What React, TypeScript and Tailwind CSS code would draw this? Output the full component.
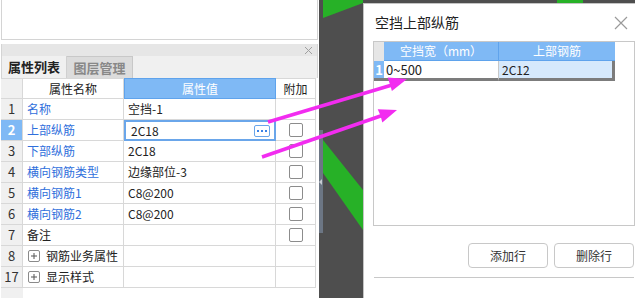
import React from "react";

const FONT = { fontFamily: '"Noto Sans CJK SC", "Noto Sans", sans-serif' };

type Row = { n: string; name: string; value: string; blue?: boolean; check?: boolean; group?: boolean; sel?: boolean };

const rows: Row[] = [
  { n: "1", name: "名称", value: "空挡-1", blue: true },
  { n: "2", name: "上部纵筋", value: "2C18", blue: true, check: true, sel: true },
  { n: "3", name: "下部纵筋", value: "2C18", blue: true, check: true },
  { n: "4", name: "横向钢筋类型", value: "边缘部位-3", blue: true, check: true },
  { n: "5", name: "横向钢筋1", value: "C8@200", blue: true, check: true },
  { n: "6", name: "横向钢筋2", value: "C8@200", blue: true, check: true },
  { n: "7", name: "备注", value: "", check: true },
  { n: "8", name: "钢筋业务属性", value: "", group: true },
  { n: "17", name: "显示样式", value: "", group: true },
];

function PlusBox() {
  return (
    <span className="inline-flex items-center justify-center w-[12px] h-[12px] border border-[#8a8a8a] rounded-[2px] mr-[6px] ml-[1px]">
      <svg width="8" height="8" viewBox="0 0 8 8">
        <path d="M1 4h6M4 1v6" stroke="#555" strokeWidth="1" />
      </svg>
    </span>
  );
}

function LeftPanel() {
  return (
    <div className="w-[319px] h-[298px] bg-white flex flex-col shrink-0">
      <div className="h-[40px] ml-[1px] mr-[1px] border-x border-b border-[#d4d4d4] bg-white" />
      <div className="h-[4px]" />
      <div className="h-[12px] ml-[1px] mr-[1px] bg-[#e6e6e6] border-x border-[#d4d4d4] flex items-center justify-end pr-[4px]">
        <svg width="9" height="9" viewBox="0 0 9 9">
          <path d="M1 1l7 7M8 1l-7 7" stroke="#a0a0a0" strokeWidth="1" />
        </svg>
      </div>
      <div className="h-[22px] ml-[1px] mr-[1px] bg-[#f0f0f0] border-x border-[#d4d4d4] flex items-stretch text-[13px]">
        <div className="w-[65px] flex items-center justify-center font-bold text-[#222] bg-[#f0f0f0] border-r border-[#d0d0d0]">属性列表</div>
        <div className="w-[66px] flex items-center justify-center font-bold text-[#888] bg-[#dcdcdc] border-r border-[#c8c8c8] border-t">图层管理</div>
      </div>
      <div className="ml-[1px] grid grid-cols-[22px_101px_152px_40px] text-[12px] w-[316px]">
        <div className="h-[21px] bg-[#f0f0f0] border-r border-b border-t border-[#d8d8d8]" />
        <div className="h-[21px] flex items-center justify-center border-r border-b border-t border-[#d8d8d8] text-[#222]">属性名称</div>
        <div className="h-[21px] flex items-center justify-center bg-[#7fb9f5] border border-[#5fa3ec] text-white">属性值</div>
        <div className="h-[21px] flex items-center justify-center border-r border-b border-t border-[#d8d8d8] text-[#222]">附加</div>
        {rows.map((r) => (
          <React.Fragment key={r.n}>
            <div
              className={
                "h-[21px] flex items-center justify-center border-r border-b border-[#d8d8d8] text-[13px] " +
                (r.sel ? "bg-[#7fb9f5] text-white font-bold" : "bg-[#f0f0f0] text-[#333]")
              }
            >
              {r.n}
            </div>
            <div
              className={
                "h-[21px] flex items-center pl-[4px] border-r border-b border-[#d8d8d8] whitespace-nowrap " +
                (r.blue ? "text-[#2f6fdc]" : "text-[#222]")
              }
            >
              {r.group && <PlusBox />}
              {r.name}
            </div>
            {r.sel ? (
              <div className="h-[21px] flex items-center justify-between pl-[5px] pr-[4px] border-2 border-[#6aa6ea] bg-white text-[#222]">
                <span>{r.value}</span>
                <span className="w-[16px] h-[12px] border border-[#6aa6ea] rounded-[2px] flex items-center justify-center gap-[2px]">
                  <span className="w-[2px] h-[2px] bg-[#3b82e6]" />
                  <span className="w-[2px] h-[2px] bg-[#3b82e6]" />
                  <span className="w-[2px] h-[2px] bg-[#3b82e6]" />
                </span>
              </div>
            ) : (
              <div className="h-[21px] flex items-center pl-[4px] border-r border-b border-[#d8d8d8] text-[#222] whitespace-nowrap">
                {r.value}
              </div>
            )}
            <div className="h-[21px] flex items-center justify-center border-r border-b border-[#d8d8d8]">
              {r.check && <span className="w-[14px] h-[14px] border border-[#8c8c8c] rounded-[2px] bg-white" />}
            </div>
          </React.Fragment>
        ))}
      </div>
      <div className="flex-1 ml-[1px] flex">
        <div className="w-[22px] bg-[#f0f0f0]" />
      </div>
    </div>
  );
}

function Dialog() {
  return (
    <div className="flex-1 h-[295px] bg-white border-l border-t border-[#c4c4c4] flex flex-col">
      <div className="h-[37px] flex items-center justify-between pl-[11px] pr-[7px]">
        <span className="text-[14px] text-[#222]">空挡上部纵筋</span>
        <svg width="14" height="14" viewBox="0 0 14 14">
          <path d="M1 1l12 12M13 1L1 13" stroke="#9a9a9a" strokeWidth="1.2" />
        </svg>
      </div>
      <div className="ml-[9px] h-[185px] border border-[#c8c8c8] bg-white">
        <div className="grid grid-cols-[10px_115px_116px] text-[12px] w-[241px]">
          <div className="h-[19px] bg-[#e6e6e6]" />
          <div className="h-[19px] flex items-center justify-center bg-[#7fb9f5] border-r border-b border-[#5fa3ec] text-white">空挡宽（mm）</div>
          <div className="h-[19px] flex items-center justify-center bg-[#7fb9f5] border-b border-[#5fa3ec] text-white">上部钢筋</div>
          <div className="h-[20px] flex items-center justify-center bg-[#7fb9f5] text-white font-bold border-b-[3px] border-[#7c7c7c] text-[13px]">1</div>
          <div className="h-[20px] flex items-center pl-[2px] bg-white text-[#222] border-r border-[#c8c8c8] border-b-[3px] border-b-[#7c7c7c] text-[13px]">0~500</div>
          <div className="h-[20px] flex items-center pl-[3px] bg-[#d6e9fc] text-[#222] border-r-[3px] border-b-[3px] border-[#7c7c7c]">2C12</div>
        </div>
      </div>
      <div className="h-[17px]" />
      <div className="flex justify-end gap-[6px] pr-[1px]">
        <button className="w-[80px] h-[25px] border border-[#c8c8c8] rounded-[4px] bg-white text-[12px] text-[#333]">添加行</button>
        <button className="w-[80px] h-[25px] border border-[#c8c8c8] rounded-[4px] bg-white text-[12px] text-[#333]">删除行</button>
      </div>
      <div className="h-[9px]" />
      <div className="ml-[10px] mr-[1px] h-[1px] bg-[#c8c8c8]" />
    </div>
  );
}

function Canvas() {
  return (
    <div className="relative flex-1 h-[298px] bg-[#4e4e4e] overflow-hidden">
      <svg className="absolute inset-0" width="316" height="298">
        <polygon points="4,0 44,0 44,3 4,18" fill="#27b127" />
        <polygon points="238,0 264,0 264,3 238,3" fill="#27b127" />
        <polygon points="4,140 44,190 44,230 4,173" fill="#27b127" />
      </svg>
      <div className="absolute left-0 top-[130px] w-[4px] h-[103px] bg-[#6c7684] flex items-center justify-center">
        <svg width="4" height="6" viewBox="0 0 4 6">
          <path d="M3 0L0 3l3 3z" fill="#c8ccd2" />
        </svg>
      </div>
      <div className="relative flex h-full pl-[44px] pt-[3px]">
        <Dialog />
      </div>
    </div>
  );
}

export default function App() {
  return (
    <div className="relative w-[635px] h-[298px] flex overflow-hidden bg-white" style={FONT}>
      <LeftPanel />
      <Canvas />
      <svg className="absolute inset-0 pointer-events-none" width="635" height="298">
        <line x1="268" y1="122" x2="392" y2="85" stroke="#f22cf0" strokeWidth="3.5" />
        <polygon points="407,79 391.9,91 390,84.5 387.7,77.6" fill="#f22cf0" />
        <line x1="262" y1="157" x2="382" y2="115.5" stroke="#f22cf0" strokeWidth="3.5" />
        <polygon points="397,110 382.3,122.5 380.5,115.5 377.7,109.3" fill="#f22cf0" />
      </svg>
    </div>
  );
}
